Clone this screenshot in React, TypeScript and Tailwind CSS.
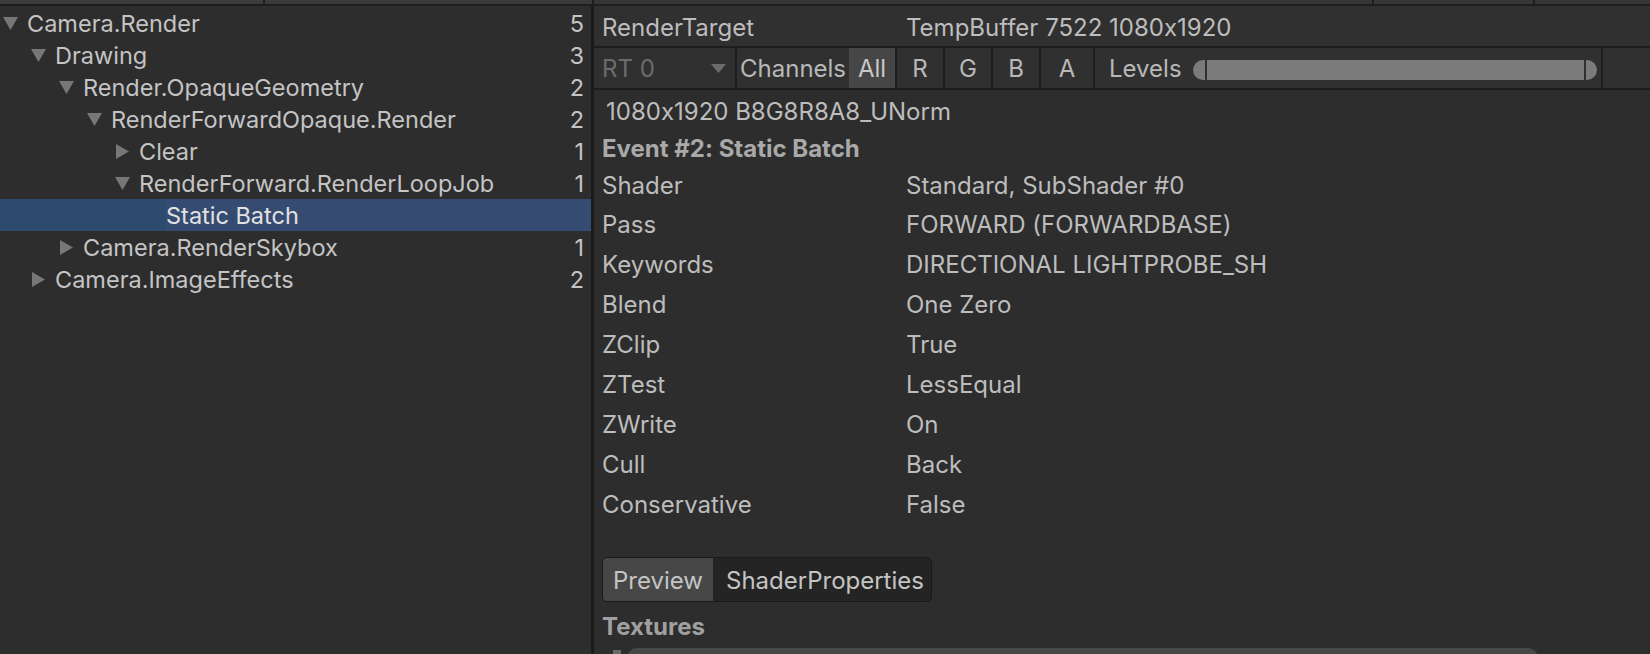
import React from "react";

type Node = {
  label: string;
  level: number;
  arrow: "down" | "right" | "none";
  count?: number;
  selected?: boolean;
};

const TREE: Node[] = [
  { label: "Camera.Render", level: 0, arrow: "down", count: 5 },
  { label: "Drawing", level: 1, arrow: "down", count: 3 },
  { label: "Render.OpaqueGeometry", level: 2, arrow: "down", count: 2 },
  { label: "RenderForwardOpaque.Render", level: 3, arrow: "down", count: 2 },
  { label: "Clear", level: 4, arrow: "right", count: 1 },
  { label: "RenderForward.RenderLoopJob", level: 4, arrow: "down", count: 1 },
  { label: "Static Batch", level: 5, arrow: "none", selected: true },
  { label: "Camera.RenderSkybox", level: 2, arrow: "right", count: 1 },
  { label: "Camera.ImageEffects", level: 1, arrow: "right", count: 2 },
];

const INDENT = ["pl-[3px]", "pl-[31px]", "pl-[59px]", "pl-[87px]", "pl-[115px]", "pl-[143px]"];

const PROPS: [string, string][] = [
  ["Pass", "FORWARD (FORWARDBASE)"],
  ["Keywords", "DIRECTIONAL LIGHTPROBE_SH"],
  ["Blend", "One Zero"],
  ["ZClip", "True"],
  ["ZTest", "LessEqual"],
  ["ZWrite", "On"],
  ["Cull", "Back"],
  ["Conservative", "False"],
];

function Arrow({ dir }: { dir: "down" | "right" }) {
  if (dir === "down") {
    return (
      <svg width="15" height="13" viewBox="0 0 15 13" className="block">
        <polygon points="0,0 15,0 7.5,13" fill="#777777" />
      </svg>
    );
  }
  return (
    <svg width="13" height="15" viewBox="0 0 13 15" className="block ml-[1px]">
      <polygon points="0,0 13,7.5 0,15" fill="#777777" />
    </svg>
  );
}

function TreeRow({ node }: { node: Node }) {
  if (node.selected) {
    return (
      <div className="flex h-[32px] items-stretch bg-[#364b71]">
        <div className="w-[166px] bg-[#2d4c6d]" />
        <div className="flex items-center pt-[2px] text-[#e2e2e2]">{node.label}</div>
      </div>
    );
  }
  return (
    <div className={`flex h-[32px] items-center pr-[7px] ${INDENT[node.level]}`}>
      <div className="w-[24px] flex items-center">
        {node.arrow !== "none" && <Arrow dir={node.arrow} />}
      </div>
      <div className="pt-[2px] text-[#c4c4c4]">{node.label}</div>
      <div className="ml-auto pt-[2px] text-[#c4c4c4]">{node.count}</div>
    </div>
  );
}

function Sep() {
  return <div className="w-[2px] self-stretch bg-[#1f1f1f]" />;
}

function ChannelButton({ label, active, wide }: { label: string; active?: boolean; wide?: boolean }) {
  return (
    <div
      className={`flex items-center justify-center self-stretch pt-[2px] ${wide ? "w-[52px]" : "w-[46px]"} ${
        active ? "bg-[#464646] text-[#c8c8c8]" : "text-[#b8b8b8]"
      }`}
    >
      {label}
    </div>
  );
}

export default function App() {
  return (
    <div className="w-[1650px] h-[654px] overflow-hidden bg-[#2d2d2d] flex flex-col font-[Inter,sans-serif] text-[24px] leading-none [font-variant-ligatures:no-contextual]">
      {/* column header strip, mostly cut off */}
      <div className="flex h-[4px] shrink-0 bg-[#1e1e1e] gap-[2px]">
        <div className="w-[263px] bg-[#3c3c3c]" />
        <div className="w-[327px] bg-[#3a3a3a]" />
        <div className="w-[778px] bg-[#363636]" />
        <div className="w-[159px] bg-[#363636]" />
        <div className="flex-1 bg-[#363636]" />
      </div>
      <div className="h-[2px] shrink-0 bg-[#1e1e1e]" />

      <div className="flex flex-1 min-h-0">
        {/* event tree */}
        <div className="w-[591px] shrink-0 pt-[1px] text-[23.5px]">
          {TREE.map((n, i) => (
            <TreeRow key={i} node={n} />
          ))}
        </div>
        <div className="w-[3px] shrink-0 bg-[#1a1a1a]" />

        {/* details */}
        <div className="flex-1 flex flex-col min-w-0">
          <div className="flex h-[40px] shrink-0 items-center bg-[#303030] pl-[8px] pt-[4px] text-[#bdbdbd]">
            <div className="w-[304px]">RenderTarget</div>
            <div>TempBuffer 7522 1080x1920</div>
          </div>
          <div className="h-[2px] shrink-0 bg-[#1d1d1d]" />

          <div className="flex h-[40px] shrink-0 items-center bg-[#303030]">
            <div className="flex w-[141px] items-center self-stretch pl-[8px] pr-[9px] text-[#6c6c6c]">
              <span className="pt-[2px]">RT 0</span>
              <svg width="15" height="9" viewBox="0 0 15 9" className="ml-auto">
                <polygon points="0,0 15,0 7.5,9" fill="#6c6c6c" />
              </svg>
            </div>
            <Sep />
            <div className="w-[112px] pl-[3px] pt-[2px] text-[#b8b8b8]">Channels</div>
            <ChannelButton label="All" active />
            <Sep />
            <ChannelButton label="R" />
            <Sep />
            <ChannelButton label="G" />
            <Sep />
            <ChannelButton label="B" />
            <Sep />
            <ChannelButton label="A" wide />
            <Sep />
            <div className="pl-[14px] pt-[2px] w-[98px] text-[#b8b8b8]">Levels</div>
            <div className="flex h-[20px] w-[404px] mt-[4px] gap-[2px]">
              <div className="w-[12px] rounded-l-full bg-[#7b7b7b]" />
              <div className="flex-1 bg-[#7b7b7b]" />
              <div className="w-[11px] rounded-r-full bg-[#7b7b7b]" />
            </div>
            <div className="w-[4px]" />
            <Sep />
          </div>
          <div className="h-[2px] shrink-0 bg-[#1d1d1d]" />

          <div className="flex flex-col pl-[8px] pt-[3px] text-[#bdbdbd]">
            <div className="flex h-[37px] items-center pl-[4px]">1080x1920 B8G8R8A8_UNorm</div>
            <div className="flex h-[37px] items-center font-bold text-[#a9a9a9]">Event #2: Static Batch</div>
            <div className="flex h-[38px] items-center">
              <div className="w-[304px]">Shader</div>
              <div>Standard, SubShader #0</div>
            </div>
            {PROPS.map(([k, v]) => (
              <div key={k} className="flex h-[40px] items-center">
                <div className="w-[304px]">{k}</div>
                <div>{v}</div>
              </div>
            ))}

            <div className="mt-[32px] flex h-[45px] w-[330px] overflow-hidden rounded-[5px] border border-[#1a1a1a] bg-[#242424]">
              <div className="flex w-[110px] items-center justify-center pt-[2px] bg-[#474747] text-[#c4c4c4]">Preview</div>
              <div className="flex flex-1 items-center pl-[13px] pt-[2px] text-[#c4c4c4]">ShaderProperties</div>
            </div>

            <div className="flex h-[44px] items-center pt-[6px] font-bold text-[#a0a0a0]">Textures</div>
          </div>
          <div className="h-[1px] bg-[#262626]" />
          <div className="flex items-start pt-[2px]">
            <div className="ml-[19px] mt-[2px] w-[8px] h-[4px] bg-[#6a6a6a]" />
            <div className="ml-[6px] h-[10px] w-[911px] rounded-tl-[10px] rounded-tr-[10px] bg-[#474747]" />
          </div>
        </div>
      </div>
    </div>
  );
}
